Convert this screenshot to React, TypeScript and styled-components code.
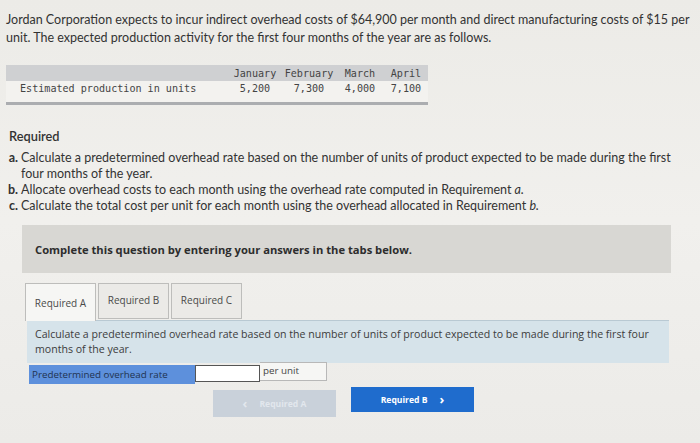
import React from "react";
import styled, { createGlobalStyle } from "styled-components";

const GlobalStyle = createGlobalStyle`
  html, body {
    margin: 0;
    padding: 0;
    background: #eeede9;
  }
  body {
    width: 700px;
    height: 443px;
    overflow: hidden;
    font-family: Lato, "Open Sans", sans-serif;
    color: #3a3a3a;
  }
`

const Page = styled.div`
  padding: 11px 6px 0 6px;
  background: linear-gradient(180deg, #ecebe7 0%, #f1f0ed 50%, #ecebe8 100%);
  height: 443px;
  box-sizing: border-box;
`

const Intro = styled.p`
  margin: 0;
  font-size: 12.5px;
  line-height: 18px;
  color: #333;
`

const DataTable = styled.table`
  margin-top: 18px;
  width: 422px;
  border-collapse: collapse;
  table-layout: fixed;
  font-family: "DejaVu Sans Mono", "Liberation Mono", monospace;
  font-size: 10.1px;
  color: #444;
  border-bottom: 3px solid #abadb0;
`

const HeadCell = styled.th<{ $w: number }>`
  width: ${(p) => p.$w}px;
  background: #cfd0d2;
  font-weight: normal;
  text-align: center;
  padding: 2px 0 1px 0;
  line-height: 13px;
  white-space: nowrap;
`

const BodyCell = styled.td<{ $label?: boolean }>`
  text-align: ${(p) => (p.$label ? "left" : "center")};
  padding: 1px 0 7px ${(p) => (p.$label ? "14px" : "0")};
  line-height: 13px;
  vertical-align: top;
  background: #f3f2ef;
  white-space: nowrap;
`

const Required = styled.div`
  margin-top: 23px;
  padding-left: 3px;
  font-size: 12.8px;
  font-weight: 600;
  color: #333;
`

const ReqList = styled.ol`
  list-style: lower-alpha;
  margin: 6px 0 0 0;
  padding-left: 15px;
  font-size: 12.5px;
  line-height: 16px;
  color: #333;
  width: 655px;

  li::marker {
    font-weight: 700;
  }
`

const Prompt = styled.div`
  margin: 11px 0 0 16px;
  width: 649px;
  height: 48px;
  box-sizing: border-box;
  padding: 17px 0 0 13px;
  background: #d8d7d3;
  font-family: "Open Sans", sans-serif;
  font-weight: 700;
  font-size: 11.2px;
  color: #2d2d2d;
`

const TabBar = styled.div`
  display: flex;
  align-items: flex-start;
  gap: 2px;
  margin: 10px 0 0 19px;
  height: 37px;
  position: relative;
  z-index: 1;
`

const Tab = styled.div<{ $active?: boolean }>`
  width: 71px;
  height: ${(p) => (p.$active ? "38px" : "36px")};
  box-sizing: border-box;
  border: 1px solid #bdbdbb;
  border-bottom: ${(p) => (p.$active ? "none" : "1px solid #bdbdbb")};
  background: ${(p) => (p.$active ? "#f6f6f4" : "#ebeae7")};
  font-family: "Open Sans", sans-serif;
  font-size: 10px;
  color: #4a4a4a;
  display: flex;
  align-items: center;
  justify-content: center;
  padding-bottom: ${(p) => (p.$active ? "0" : "2px")};
`

const Instructions = styled.div`
  margin: 0 0 0 21px;
  width: 642px;
  box-sizing: border-box;
  padding: 6px 0 6px 8px;
  background: #d6e3ea;
  border-top: 1px solid #b9c9d3;
  font-family: "Open Sans", sans-serif;
  font-size: 10.6px;
  line-height: 15px;
  color: #3c3c3c;
`

const AnswerRow = styled.div`
  display: flex;
  align-items: flex-start;
  margin: 2px 0 0 23px;
`

const RowLabel = styled.div`
  width: 166px;
  height: 19px;
  background: #5d90dc;
  color: #1f3350;
  font-family: "Open Sans", sans-serif;
  font-size: 9.8px;
  display: flex;
  align-items: center;
  padding-left: 3px;
  box-sizing: border-box;
`

const Input = styled.div`
  width: 65px;
  height: 17px;
  background: #fff;
  border: 1px solid #555;
  box-sizing: border-box;
`

const Unit = styled.div`
  width: 67px;
  height: 19px;
  background: #f6f6f4;
  border: 1px solid #b8b8b8;
  border-left: none;
  box-sizing: border-box;
  font-family: "Open Sans", sans-serif;
  font-size: 9.8px;
  color: #444;
  padding: 1px 0 0 3px;
  margin-top: -3px;
`

const NavRow = styled.div`
  display: flex;
  align-items: flex-start;
  gap: 15px;
  margin: 6px 0 0 207px;
`

const NavButton = styled.div<{ $primary?: boolean }>`
  width: 123px;
  height: ${(p) => (p.$primary ? "25px" : "27px")};
  display: flex;
  align-items: center;
  justify-content: center;
  gap: 12px;
  font-family: "Open Sans", sans-serif;
  font-weight: 700;
  font-size: 8.6px;
  background: ${(p) => (p.$primary ? "#1f6ccd" : "#c9d1da")};
  color: ${(p) => (p.$primary ? "#ffffff" : "#e2e7ed")};
  margin-top: ${(p) => (p.$primary ? "-3px" : "0")};
`

const Chevron = styled.span`
  font-size: 13px;
  font-weight: 700;
  line-height: 1;
`

export default function App() {
  const months: [string, number][] = [
    ["January", 54],
    ["February", 54],
    ["March", 48],
    ["April", 44],
  ];
  const units = ["5,200", "7,300", "4,000", "7,100"];

  return (
    <Page>
      <GlobalStyle />
      <Intro>
        Jordan Corporation expects to incur indirect overhead costs of $64,900 per month and direct manufacturing costs of $15 per
        unit. The expected production activity for the first four months of the year are as follows.
      </Intro>

      <DataTable>
        <thead>
          <tr>
            <HeadCell $w={222}></HeadCell>
            {months.map(([m, w]) => (
              <HeadCell key={m} $w={w}>
                {m}
              </HeadCell>
            ))}
          </tr>
        </thead>
        <tbody>
          <tr>
            <BodyCell $label>Estimated production in units</BodyCell>
            {units.map((u) => (
              <BodyCell key={u}>{u}</BodyCell>
            ))}
          </tr>
        </tbody>
      </DataTable>

      <Required>Required</Required>
      <ReqList>
        <li>
          Calculate a predetermined overhead rate based on the number of units of product expected to be made during the first
          four months of the year.
        </li>
        <li>
          Allocate overhead costs to each month using the overhead rate computed in Requirement <i>a.</i>
        </li>
        <li>
          Calculate the total cost per unit for each month using the overhead allocated in Requirement <i>b.</i>
        </li>
      </ReqList>

      <Prompt>Complete this question by entering your answers in the tabs below.</Prompt>

      <TabBar>
        <Tab $active>Required A</Tab>
        <Tab>Required B</Tab>
        <Tab>Required C</Tab>
      </TabBar>
      <Instructions>
        Calculate a predetermined overhead rate based on the number of units of product expected to be made during the first four
        months of the year.
      </Instructions>

      <AnswerRow>
        <RowLabel>Predetermined overhead rate</RowLabel>
        <Input />
        <Unit>per unit</Unit>
      </AnswerRow>

      <NavRow>
        <NavButton>
          <Chevron>&#x2039;</Chevron>
          <span>Required A</span>
        </NavButton>
        <NavButton $primary>
          <span>Required B</span>
          <Chevron>&#x203A;</Chevron>
        </NavButton>
      </NavRow>
    </Page>
  );
}
